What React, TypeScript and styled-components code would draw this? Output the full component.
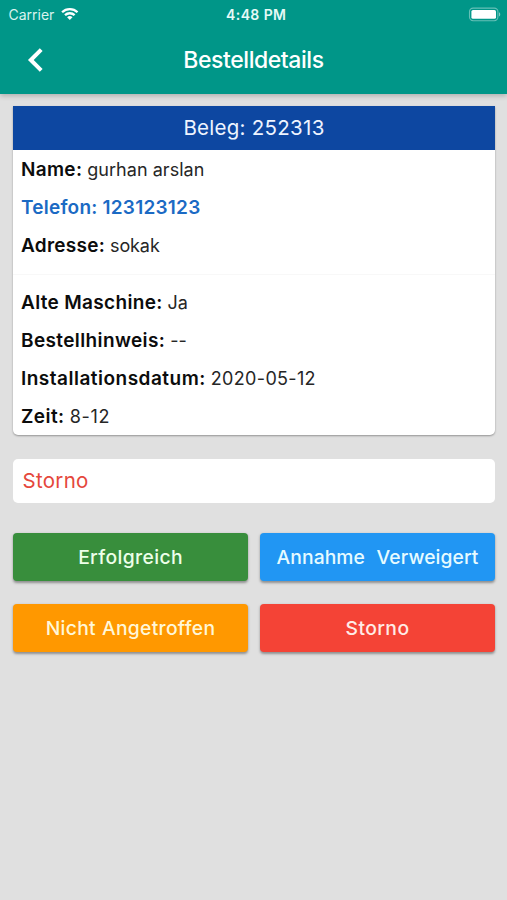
import React from "react";
import styled, { createGlobalStyle } from "styled-components";

const GlobalStyle = createGlobalStyle`
  * { box-sizing: border-box; }
  body {
    margin: 0;
    background: #e0e0e0;
    font-family: Inter, "Liberation Sans", sans-serif;
  }
`;

const Screen = styled.main`
  min-height: 900px;
  background: #e0e0e0;
`;

const Header = styled.header`
  height: 94px;
  background: #009688;
  color: #fff;
  box-shadow: 0 2px 5px rgba(0, 0, 0, 0.22);
`;

const StatusBar = styled.div`
  height: 27px;
  padding: 0 6px 0 8.5px;
  display: grid;
  grid-template-columns: 1fr auto 1fr;
  align-items: center;
`;

const Carrier = styled.div`
  display: flex;
  align-items: center;
  gap: 7px;
  font-size: 14px;
  line-height: 27px;
  color: #d9f3ef;
  svg { display: block; margin-top: -1px; }
`;

const Clock = styled.div`
  font-size: 14px;
  font-weight: 600;
  letter-spacing: 0.4px;
  line-height: 27px;
  padding-top: 1px;
  color: #e6faf7;
  margin-left: 3px;
`;

const BatterySlot = styled.div`
  display: flex;
  justify-content: flex-end;
`;

const NavBar = styled.div`
  height: 66px;
  display: grid;
  grid-template-columns: 72px 1fr 72px;
  align-items: center;
`;

const BackButton = styled.button`
  border: 0;
  padding: 0 0 1px 27px;
  background: none;
  color: #fff;
  display: flex;
`;

const Title = styled.h1`
  margin: 0;
  font-size: 23px;
  font-weight: 500;
  letter-spacing: -0.44px;
  line-height: 66px;
  text-align: center;
`;

const Content = styled.div`
  padding: 12px 12px 0 13px;
`;

const Card = styled.section`
  height: 329px;
  background: #fff;
  border-radius: 0 0 5px 5px;
  box-shadow: 0 1px 2px rgba(0, 0, 0, 0.34);
`;

const CardTitle = styled.h2`
  margin: 0;
  height: 44px;
  line-height: 44px;
  background: #0d47a1;
  color: #eef4ff;
  font-size: 20.5px;
  font-weight: 400;
  letter-spacing: 0.27px;
  text-align: center;
`;

const Row = styled.div<{ $link?: boolean }>`
  height: 38px;
  padding: 1px 0 0 8px;
  display: flex;
  align-items: baseline;
  gap: 5px;
  line-height: 37px;
  white-space: nowrap;
  color: ${(p) => (p.$link ? "#1b6ac4" : "#0c0c0c")};
`;

const Label = styled.span<{ $track: number }>`
  font-size: 19px;
  font-weight: 600;
  letter-spacing: ${(p) => p.$track}px;
`;

const Value = styled.span<{ $track: number }>`
  font-size: 18px;
  color: #262626;
  letter-spacing: ${(p) => p.$track}px;
`;

const Divider = styled.hr`
  margin: 10px 0 8px;
  border: 0;
  height: 1px;
  background: #f8f8f8;
`;

const StatusField = styled.div`
  height: 44px;
  margin-top: 24px;
  padding-left: 9.5px;
  border-radius: 5px;
  background: #fff;
  color: #e5473c;
  font-size: 20.5px;
  letter-spacing: 0.3px;
  line-height: 44px;
`;

const Actions = styled.div`
  margin-top: 30px;
  display: grid;
  grid-template-columns: 1fr 1fr;
  gap: 23px 12px;
`;

const ActionButton = styled.button<{ $bg: string; $fg: string; $track: number }>`
  height: 48px;
  padding: 0;
  border: 0;
  border-radius: 4px;
  background: ${(p) => p.$bg};
  color: ${(p) => p.$fg};
  box-shadow: 0 1.5px 2.5px rgba(0, 0, 0, 0.36);
  font: 500 19.3px/48px Inter, "Liberation Sans", sans-serif;
  letter-spacing: ${(p) => p.$track}px;
  word-spacing: 0.6px;
  white-space: pre;
`;

type Field = { label: string; labelTrack: number; value?: string; valueTrack?: number; link?: boolean };

const customer: Field[] = [
  { label: "Name:", labelTrack: 0.3, value: "gurhan arslan", valueTrack: 0.04 },
  { label: "Telefon: 123123123", labelTrack: 0.23, link: true },
  { label: "Adresse:", labelTrack: 0.26, value: "sokak", valueTrack: -0.1 },
];

const order: Field[] = [
  { label: "Alte Maschine:", labelTrack: 0.32, value: "Ja", valueTrack: 0 },
  { label: "Bestellhinweis:", labelTrack: 0.38, value: "--", valueTrack: 0 },
  { label: "Installationsdatum:", labelTrack: 0.49, value: "2020-05-12", valueTrack: 0.33 },
  { label: "Zeit:", labelTrack: 0.45, value: "8-12", valueTrack: 0.7 },
];

const FieldRow = ({ field }: { field: Field }) => (
  <Row $link={field.link}>
    <Label $track={field.labelTrack}>{field.label}</Label>
    {field.value && <Value $track={field.valueTrack ?? 0}>{field.value}</Value>}
  </Row>
);

const WifiIcon = () => (
  <svg width="18" height="14" viewBox="0 0 18 14" fill="none" stroke="#fff" strokeWidth="2.3">
    <path d="M1.1 5.2a11 11 0 0 1 15.4 0" />
    <path d="M4 8.2a6.9 6.9 0 0 1 9.6 0" />
    <path d="M8.8 13 6.1 10.3a3.9 3.9 0 0 1 5.4 0Z" fill="#fff" stroke="none" />
  </svg>
);

const BatteryIcon = () => (
  <svg width="33" height="15" viewBox="0 0 33 15">
    <rect x="1.5" y="1.1" width="28.4" height="12.6" rx="3.6" fill="none" stroke="#fff" strokeOpacity=".4" strokeWidth="1.1" />
    <rect x="3.4" y="3" width="24.6" height="8.8" rx="1.6" fill="#fff" />
    <path d="M31 5.3c1.7.6 1.7 3.6 0 4.2Z" fill="#fff" fillOpacity=".5" />
  </svg>
);

export default function App() {
  return (
    <Screen>
      <GlobalStyle />
      <Header>
        <StatusBar>
          <Carrier>Carrier<WifiIcon /></Carrier>
          <Clock>4:48 PM</Clock>
          <BatterySlot><BatteryIcon /></BatterySlot>
        </StatusBar>
        <NavBar>
          <BackButton aria-label="Zurück">
            <svg width="17" height="26" viewBox="0 0 17 26" fill="none" stroke="#fff" strokeWidth="4">
              <path d="M14.2 2.6 3.8 13 14.2 23.4" />
            </svg>
          </BackButton>
          <Title>Bestelldetails</Title>
        </NavBar>
      </Header>
      <Content>
        <Card>
          <CardTitle>Beleg: 252313</CardTitle>
          {customer.map((f) => <FieldRow key={f.label} field={f} />)}
          <Divider />
          {order.map((f) => <FieldRow key={f.label} field={f} />)}
        </Card>
        <StatusField>Storno</StatusField>
        <Actions>
          <ActionButton $bg="#388e3c" $fg="#edffe9" $track={0.37}>Erfolgreich</ActionButton>
          <ActionButton $bg="#2196f3" $fg="#e6fbff" $track={0.08}>{"Annahme  Verweigert"}</ActionButton>
          <ActionButton $bg="#ff9800" $fg="#fff7d8" $track={0.3}>Nicht Angetroffen</ActionButton>
          <ActionButton $bg="#f44336" $fg="#ffebe6" $track={0.42}>Storno</ActionButton>
        </Actions>
      </Content>
    </Screen>
  );
}
